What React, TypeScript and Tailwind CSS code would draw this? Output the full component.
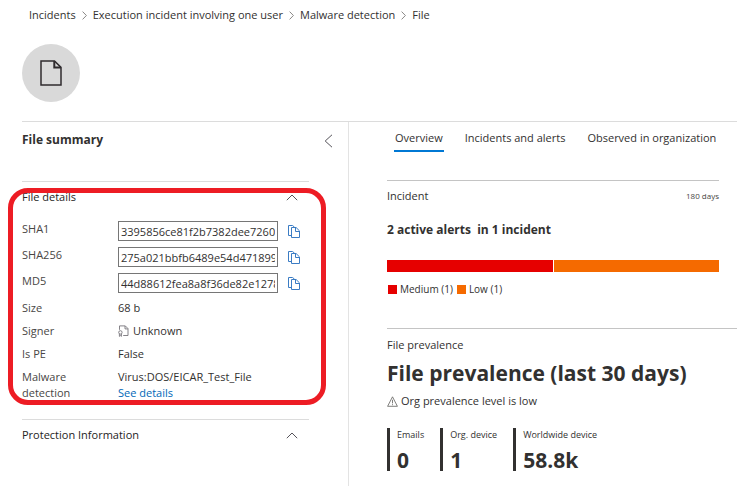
import { Fragment, useState } from "react"
import type { ReactNode } from "react"

const crumbs = ["Incidents", "Execution incident involving one user", "Malware detection", "File"]

const hashes = [
  { id: "sha1", label: "SHA1", value: "3395856ce81f2b7382dee72602f798b642f14140" },
  { id: "sha256", label: "SHA256", value: "275a021bbfb6489e54d471899f7db9d1663fc695ec2fe2a2c4538aabf651fd0f" },
  { id: "md5", label: "MD5", value: "44d88612fea8a8f36de82e1278abb02f" },
]

const tabs = ["Overview", "Incidents and alerts", "Observed in organization"]

const severities = [
  { name: "Medium", count: 1, color: "bg-[#e60000]" },
  { name: "Low", count: 1, color: "bg-[#f56a00]" },
]

const prevalence = [
  { label: "Emails", value: "0" },
  { label: "Org. device", value: "1" },
  { label: "Worldwide device", value: "58.8k" },
]

function FileIcon() {
  return (
    <svg width="22" height="26" viewBox="0 0 22 26" fill="none" stroke="#2f2b2e" strokeWidth="1.5" aria-hidden="true">
      <path d="M1 .9h13.5L21 7.4v17.7H1z" />
      <path d="M14.3 1v6.6H21" strokeWidth="2" />
    </svg>
  )
}

function CopyIcon() {
  return (
    <svg width="12" height="13" viewBox="0 0 12 13" fill="none" stroke="#3b7cc4" aria-hidden="true">
      <path d="M3.5 10.5h-3V.5h4l2 1.6" />
      <path d="M3.5 2.5h4.6l3.4 3.4v6.6h-8z" fill="#fff" />
      <path d="M7.5 2.8v3.7h3.8" />
    </svg>
  )
}

function CertificateIcon() {
  return (
    <svg width="11" height="12" viewBox="0 0 11 12" fill="none" stroke="#77757a" strokeWidth="0.9" aria-hidden="true">
      <path d="M1.5 4.8V.9h5.8l2.7 2.7v6.9H5.2" />
      <path d="M7 1v2.9h2.9" />
      <circle cx="2.4" cy="7.4" r="1.7" />
      <path d="M1.4 8.8v2.6l1-.8 1 .8V8.8" />
    </svg>
  )
}

function WarningIcon() {
  return (
    <svg width="11" height="11" viewBox="0 0 11 11" fill="none" stroke="#605e5c" strokeWidth="0.8" aria-hidden="true">
      <path d="M5.5.8l4.9 9.5H.6z" />
      <path d="M5.5 3.8v3.6M5.5 8.2v1" />
    </svg>
  )
}

function Chevron({ direction }: { direction: "up" | "down" }) {
  return (
    <svg width="12" height="7" viewBox="0 0 12 7" fill="none" stroke="#55535a" aria-hidden="true">
      <path d={direction === "up" ? "M.8 6.2L6 1l5.2 5.2" : "M.8.8L6 6l5.2-5.2"} />
    </svg>
  )
}

function Section({ title, children }: { title: string; children?: ReactNode }) {
  const [open, setOpen] = useState(true)

  return (
    <section className="border-t border-[#dcdcdc]">
      <button
        onClick={() => setOpen(!open)}
        aria-expanded={open}
        className="flex h-[30px] w-full items-center justify-between pr-[11px] text-[#252423]"
      >
        {title}
        <Chevron direction={open ? "up" : "down"} />
      </button>
      {open && children}
    </section>
  )
}

function Detail({ label, children }: { label: string; children: ReactNode }) {
  return (
    <div className="flex">
      <dt className="w-24 shrink-0 pr-6">{label}</dt>
      <dd className="text-[#323130]">{children}</dd>
    </div>
  )
}

export default function App() {
  const [activeTab, setActiveTab] = useState("Overview")

  return (
    <div className="flex min-h-screen flex-col overflow-x-clip bg-white pl-[22px] font-['Open_Sans','Segoe_UI',sans-serif] text-[11px] leading-4 text-[#323130]">
      <header className="border-b border-[#dcdcdc] pb-[19px]">
        <nav aria-label="Breadcrumb" className="flex items-center gap-1.5 pt-[7px] pl-[7px] whitespace-nowrap">
          {crumbs.map((crumb, i) => (
            <Fragment key={crumb}>
              {i > 0 && (
                <svg width="5" height="9" viewBox="0 0 5 9" fill="none" stroke="#8a8886" aria-hidden="true">
                  <path d="M.6.6l3.8 3.9L.6 8.4" />
                </svg>
              )}
              <a href="#">{crumb}</a>
            </Fragment>
          ))}
        </nav>
        <div className="mt-[21px] flex size-[58px] items-center justify-center rounded-full bg-[#d9d9d9]">
          <FileIcon />
        </div>
      </header>

      <div className="flex flex-1">
        <aside className="w-[327px] shrink-0 border-r border-[#e3e3e3] pr-[39px]">
          <div className="flex h-[59px] items-start justify-between pt-2">
            <h1 className="text-[12px] leading-5 font-bold">File summary</h1>
            <button aria-label="Collapse summary" className="-mr-6 pt-1">
              <svg width="9" height="14" viewBox="0 0 9 14" fill="none" stroke="#55535a" aria-hidden="true">
                <path d="M8 .8L1.2 7 8 13.2" />
              </svg>
            </button>
          </div>

          <div className="relative">
            <Section title="File details">
              <div className="pt-[5px] text-[#484644]">
                {hashes.map((hash) => (
                  <div key={hash.id} className="flex h-[26px] items-start pt-1">
                    <label htmlFor={hash.id} className="w-24 shrink-0">
                      {hash.label}
                    </label>
                    <input
                      id={hash.id}
                      readOnly
                      defaultValue={hash.value}
                      className="h-5 w-40 border border-[#767676] px-0.5 text-[#323130]"
                    />
                    <button aria-label={`Copy ${hash.label}`} className="flex h-5 items-center pl-2.5">
                      <CopyIcon />
                    </button>
                  </div>
                ))}
                <dl className="flex flex-col gap-[7px] pt-[5px]">
                  <Detail label="Size">68 b</Detail>
                  <Detail label="Signer">
                    <span className="flex items-center gap-1">
                      <CertificateIcon />
                      Unknown
                    </span>
                  </Detail>
                  <Detail label="Is PE">False</Detail>
                  <Detail label="Malware detection">
                    Virus:DOS/EICAR_Test_File
                    <br />
                    <a href="#" className="text-[#0067b8]">
                      See details
                    </a>
                  </Detail>
                </dl>
              </div>
            </Section>
            <div className="pointer-events-none absolute top-[7px] -right-[17px] -bottom-1 -left-[14px] rounded-[20px] border-[5px] border-[#ed1c24]" />
          </div>

          <div className="pt-[18px]">
            <Section title="Protection Information" />
          </div>
        </aside>

        <main className="min-w-0 flex-1 pl-[38px]">
          <div role="tablist" className="flex gap-5 pt-2 pl-[7px] whitespace-nowrap">
            {tabs.map((tab) => (
              <button
                key={tab}
                role="tab"
                aria-selected={tab === activeTab}
                onClick={() => setActiveTab(tab)}
                className={`border-b-2 px-px pb-1 ${tab === activeTab ? "border-[#0078d4]" : "border-transparent"}`}
              >
                {tab}
              </button>
            ))}
          </div>

          <section className="mt-7 mr-[18px] border-t border-[#c4c4c4] pt-[7px]">
            <div className="flex items-center justify-between">
              <h2>Incident</h2>
              <span className="text-[8px] text-[#484644]">180 days</span>
            </div>
            <p className="mt-4 text-[12px] leading-5 font-bold">2 active alerts&nbsp; in 1 incident</p>
            <div className="mt-5 flex h-3 gap-px">
              {severities.map((s) => (
                <div key={s.name} className={`flex-1 ${s.color}`} />
              ))}
            </div>
            <ul className="mt-[9px] flex gap-1 pl-px text-[10px]">
              {severities.map((s) => (
                <li key={s.name} className="flex items-center gap-[3px]">
                  <span className={`size-[9px] ${s.color}`} />
                  {s.name} ({s.count})
                </li>
              ))}
            </ul>
          </section>

          <section className="mt-[31px] border-t border-[#c4c4c4] pt-2">
            <h2>File prevalence</h2>
            <p className="mt-1 text-[21px] leading-8 font-bold">File prevalence (last 30 days)</p>
            <p className="mt-1 flex items-center gap-[3px]">
              <WarningIcon />
              Org prevalence level is low
            </p>
            <ul className="mt-[19px] flex gap-4">
              {prevalence.map((item) => (
                <li key={item.label} className="h-[43px] border-l-[3px] border-[#323130] pl-[7px]">
                  <p className="text-[9px] leading-[14px]">{item.label}</p>
                  <p className="mt-1 text-[21px] leading-7 font-bold">{item.value}</p>
                </li>
              ))}
            </ul>
          </section>
        </main>
      </div>
    </div>
  )
}
